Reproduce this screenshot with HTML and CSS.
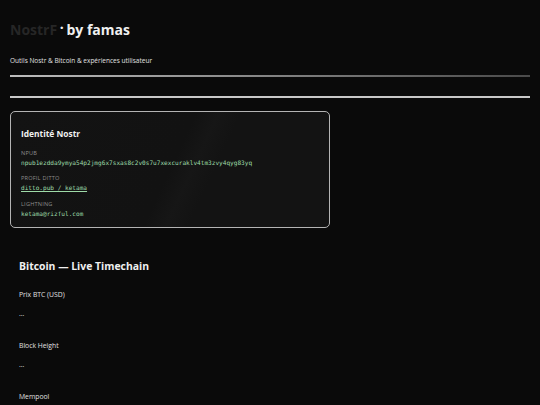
FILE: index.html
```html
<!DOCTYPE html>
<html lang="fr">
  <head>
    <title>NostrF by famas</title>
    <meta charset="UTF-8">
    <link rel="stylesheet" href="styles.css">
  </head>
  <body>
    <header class="site-header">
      <h1 class="site-title"><span class="brand">NostrF</span> <span class="dot">·</span> by famas</h1>
      <p class="tagline">Outils Nostr &amp; Bitcoin &amp; expériences utilisateur</p>
    </header>

    <hr class="divider">

    <main>
      <section class="card">
        <h2 class="card-title">Identité Nostr</h2>
        <div class="field">
          <span class="field-label">npub</span>
          <code class="field-value">npub1ezdda9ymya54p2jmg6x7sxas8c2v0s7u7xexcuraklv4tm3zvy4qyg83yq</code>
        </div>
        <div class="field">
          <span class="field-label">Profil Ditto</span>
          <a class="field-value link" href="">ditto.pub / ketama</a>
        </div>
        <div class="field">
          <span class="field-label">Lightning</span>
          <code class="field-value">ketama@rizful.com</code>
        </div>
      </section>

      <section class="timechain">
        <h2 class="section-title">Bitcoin — Live Timechain</h2>
        <div class="stat">
          <p class="stat-label">Prix BTC (USD)</p>
          <p class="stat-value">...</p>
        </div>
        <div class="stat">
          <p class="stat-label">Block Height</p>
          <p class="stat-value">...</p>
        </div>
        <div class="stat">
          <p class="stat-label">Mempool</p>
          <p class="stat-value">...</p>
        </div>
      </section>
    </main>
  </body>
</html>
```

FILE: styles.css
```css
/* General styles */

html {
  font-family: "Open Sans", "Noto Sans", sans-serif;
  font-size: 16px;
}

body {
  margin: 0;
  padding: 0 10px;
  background-color: #0a0a0a;
  color: #e6e6e6;
}

/* Header */

.site-header {
  padding-top: 18px;
  padding-bottom: 9px;
  border-bottom: 2px solid transparent;
  border-image: linear-gradient(to right, #bdbdbd, #4a4a4a) 1;
}

.site-title {
  margin: 0;
  font-size: 14px;
  font-weight: 700;
  line-height: 24px;
  color: #f0f0f0;
}

.site-title .brand {
  color: #262626;
}

.site-title .dot {
  position: relative;
  top: -2px;
  margin: 0 -1px;
}

.tagline {
  margin: 14px 0 0;
  font-size: 6.5px;
  line-height: 10px;
  color: #e0e0e0;
}

.divider {
  margin: 19px 0 0;
  height: 0;
  border: 0;
  border-top: 2px solid #c8c8c8;
}

/* Identity card */

.card {
  width: 298px;
  margin-top: 13px;
  padding: 16px 10px 8px;
  border: 1px solid #b4b4b4;
  border-radius: 5px;
  background: linear-gradient(115deg, #131313 0%, #121212 50%, #161616 56%, #131313 62%, #131313 100%);
}

.card-title {
  margin: 0 0 9px;
  font-size: 8.4px;
  font-weight: 700;
  line-height: 12px;
  color: #f0f0f0;
}

.field {
  display: flex;
  flex-direction: column;
  margin-bottom: 6px;
}

.field:nth-child(3) {
  margin-bottom: 7px;
}

.field:last-child {
  margin-bottom: 0;
}

.field-label {
  font-size: 5.6px;
  line-height: 8px;
  text-transform: uppercase;
  letter-spacing: 0.2px;
  color: #8c8c8c;
}

.field-value {
  font-family: "DejaVu Sans Mono", monospace;
  font-size: 6.1px;
  line-height: 10px;
  margin-top: 1px;
  color: #9edba8;
}

.field-value.link {
  align-self: flex-start;
  text-decoration: underline;
}

/* Timechain */

.timechain {
  margin-top: 30px;
  padding-left: 9px;
}

.section-title {
  margin: 0 0 16px;
  font-size: 10.4px;
  font-weight: 700;
  line-height: 16px;
  color: #f0f0f0;
}

.stat {
  margin-bottom: 22px;
}

.stat-label,
.stat-value {
  margin: 0;
  font-size: 6.8px;
  line-height: 10px;
  color: #e0e0e0;
}

.stat-value {
  margin-top: 9px;
}
```
